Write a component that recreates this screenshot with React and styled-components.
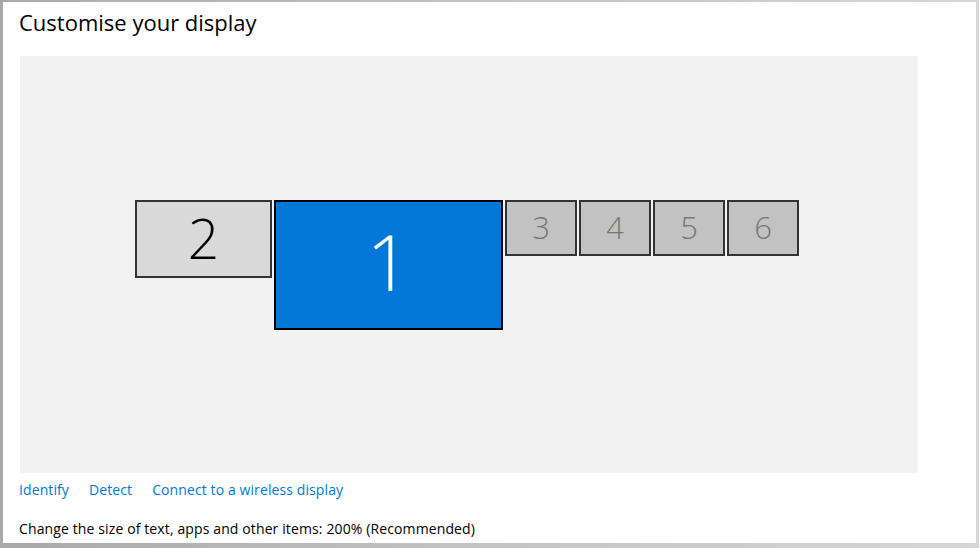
import React from "react";
import styled, { createGlobalStyle } from "styled-components";

const Global = createGlobalStyle`
  html, body { margin: 0; padding: 0; }
  body {
    width: 979px;
    height: 548px;
    overflow: hidden;
    background: linear-gradient(90deg, #a9a9a9 0%, #c4c4c4 50%, #d6d6d6 100%);
    font-family: "Open Sans", "Noto Sans", sans-serif;
  }
`;

const Window = styled.div`
  box-sizing: border-box;
  margin: 2px 3px 0 3px;
  width: 973px;
  height: 541px;
  background: #ffffff;
  padding: 0 0 0 16px;
  display: flex;
  flex-direction: column;
`;

const Title = styled.h1`
  margin: 6px 0 0 0;
  font-size: 22px;
  font-weight: 400;
  color: #000;
  line-height: 28px;
  letter-spacing: 0;
`;

const Canvas = styled.div`
  margin: 20px 0 0 1px;
  width: 898px;
  height: 417px;
  background: #f2f2f2;
  display: flex;
  align-items: center;
  justify-content: center;
`;

const Group = styled.div`
  display: flex;
  align-items: flex-start;
  gap: 2px;
  margin-right: 4px;
`;

const Monitor = styled.div`
  box-sizing: border-box;
  width: ${(p) => p.$w}px;
  height: ${(p) => p.$h}px;
  background: ${(p) => p.$bg};
  border: 2px solid ${(p) => p.$border};
  color: ${(p) => p.$fg};
  font-size: ${(p) => p.$fs}px;
  font-weight: 300;
  display: flex;
  align-items: center;
  justify-content: center;
  line-height: 1;
  padding-bottom: ${(p) => p.$pb || 0}px;
`;

const Links = styled.div`
  display: flex;
  gap: 20px;
  margin-top: 7px;
  margin-left: 0;
`;

const LinkText = styled.a`
  color: #0078d7;
  font-size: 14px;
  line-height: 20px;
  letter-spacing: 0.1px;
  text-decoration: none;
  cursor: pointer;
`;

const Info = styled.p`
  margin: 19px 0 0 0;
  font-size: 14px;
  line-height: 20px;
  color: #000;
  letter-spacing: 0.12px;
`;

const small = { $w: 72, $h: 56, $bg: "#c2c2c2", $border: "#333333", $fg: "#777777", $fs: 31 };

export default function App() {
  return (
    <>
      <Global />
      <Window>
        <Title>Customise your display</Title>
        <Canvas>
          <Group>
            <Monitor $w={137} $h={78} $bg="#d9d9d9" $border="#333333" $fg="#000" $fs={55} $pb={3}>2</Monitor>
            <Monitor $w={229} $h={130} $bg="#0078d7" $border="#000000" $fg="#fff" $fs={78} $pb={8}>1</Monitor>
            <Monitor {...small}>3</Monitor>
            <Monitor {...small}>4</Monitor>
            <Monitor {...small}>5</Monitor>
            <Monitor {...small}>6</Monitor>
          </Group>
        </Canvas>
        <Links>
          <LinkText>Identify</LinkText>
          <LinkText>Detect</LinkText>
          <LinkText>Connect to a wireless display</LinkText>
        </Links>
        <Info>Change the size of text, apps and other items: 200% (Recommended)</Info>
      </Window>
    </>
  );
}
